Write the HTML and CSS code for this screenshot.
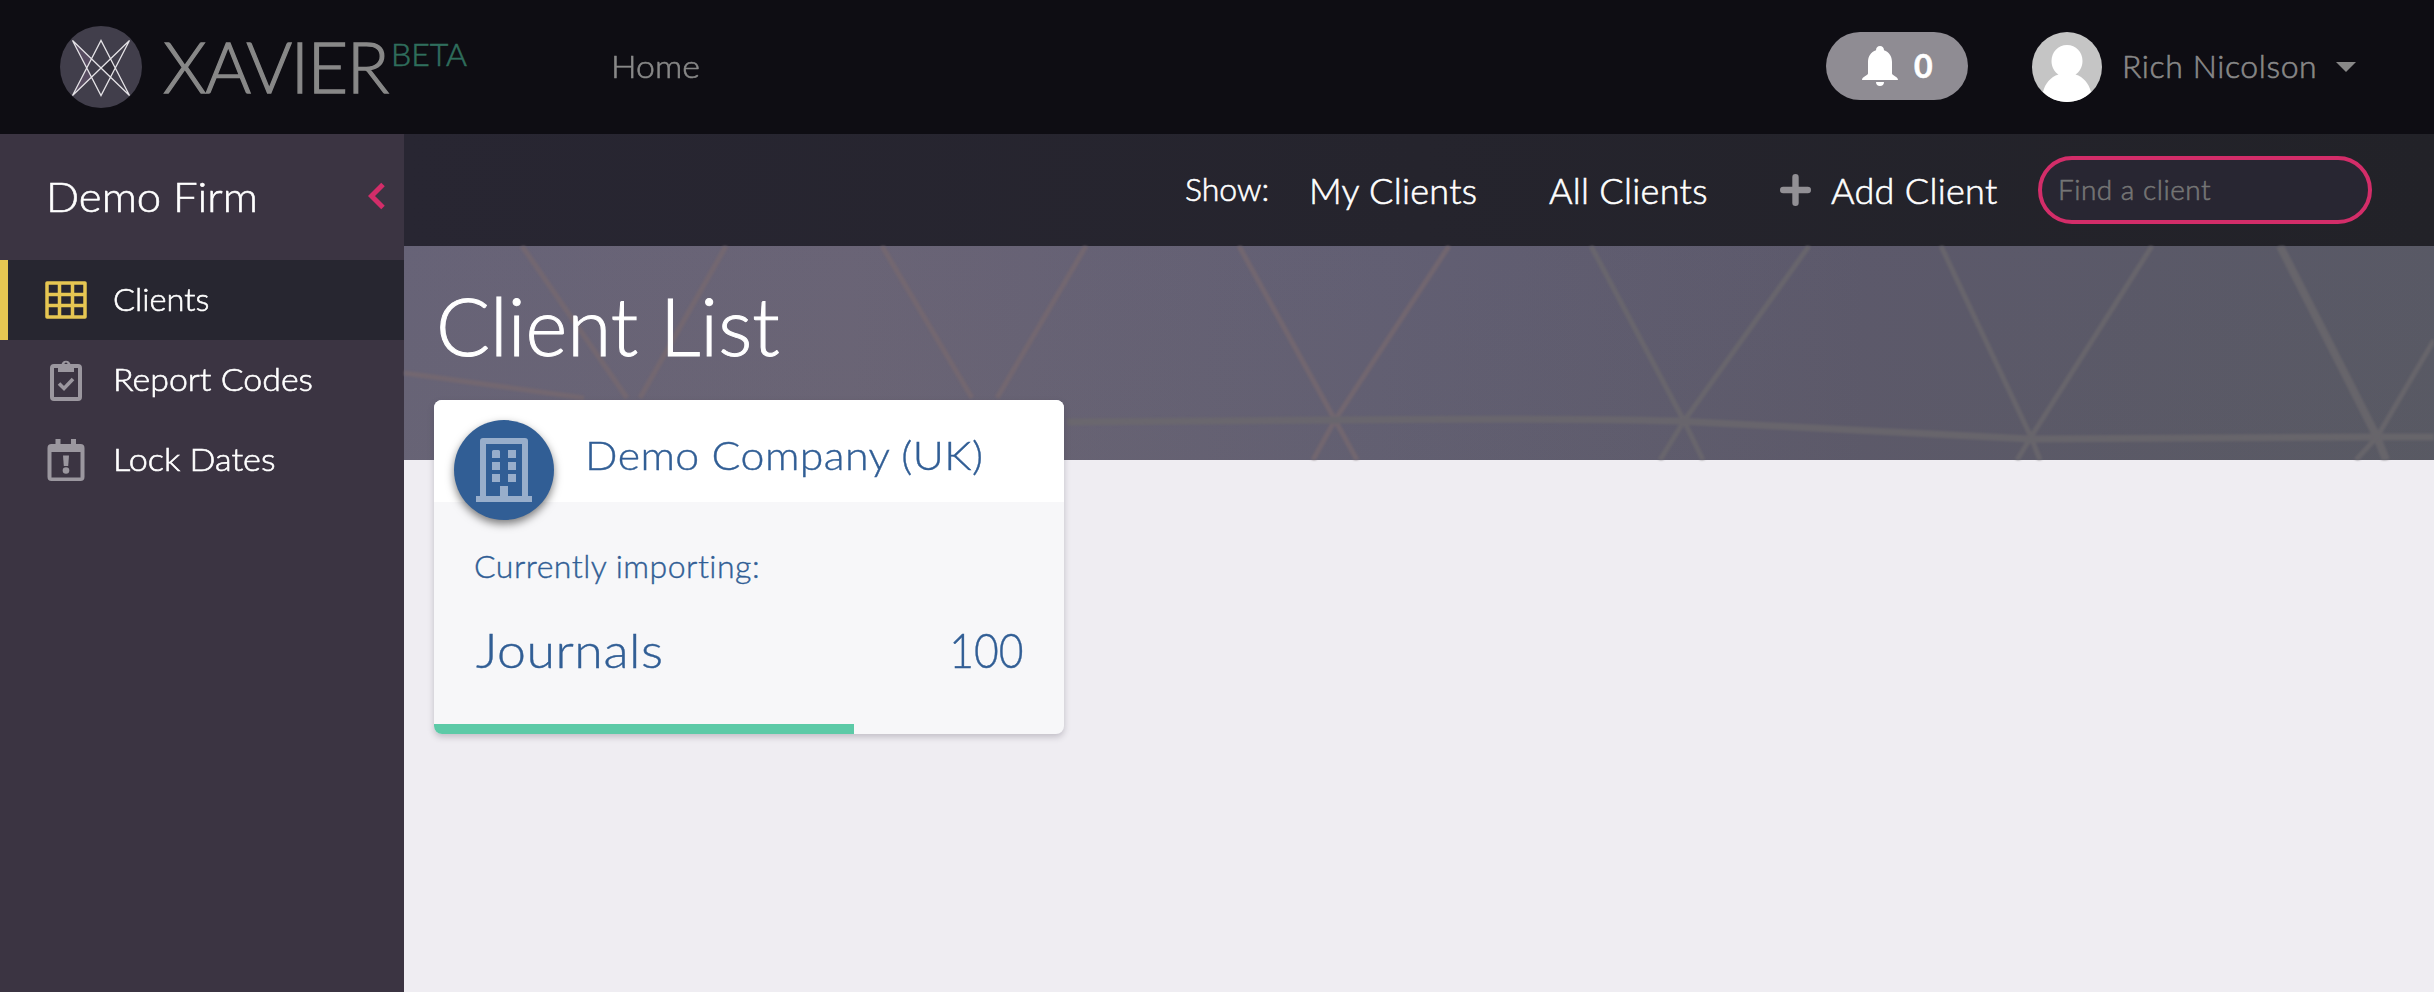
FILE: index.html
```html
<!DOCTYPE html>
<html lang="en">
<head>
<meta charset="utf-8">
<title>Xavier</title>
<link rel="stylesheet" href="styles.css">
</head>
<body>
<header class="topbar">
  <div class="brand">
    <svg class="brand-mark" viewBox="0 0 82 82">
      <circle cx="41" cy="41" r="41" fill="#413e4b"/>
      <path d="M12.500 14.500 32 33 27 42 32 51 12.500 69.500 27 42Z" fill="#584c61"/>
      <path d="M41 42 51 32 56 42 51 52Z" fill="#302d38"/>
      <path d="M12.500 14.500 41 69.500 69.500 14.500 12.500 69.500 41 14.500 69.500 69.500Z" fill="none" stroke="#e4e2e6" stroke-width="1.300"/>
    </svg>
    <span class="brand-name">XAVIER</span><span class="brand-tag">BETA</span>
  </div>
  <nav class="topnav"><a class="home">Home</a></nav>
  <div class="notice">
    <svg class="bell" viewBox="0 0 36 40"><path d="M18 0c2.500 0 4 1.800 4 4.200 5.200 1.800 8 6 8 11.800v11.500c0 2 6 3 6 6.500H0c0-3.500 6-4.500 6-6.500V16c0-5.800 2.800-10 8-11.800C14 1.800 15.500 0 18 0zM14 36h8c0 2.500-1.500 4-4 4s-4-1.500-4-4z" fill="#fff"/></svg>
    <span class="count">0</span>
  </div>
  <div class="user">
    <svg class="avatar" viewBox="0 0 70 70"><circle cx="35" cy="35" r="35" fill="#c5c5c5"/><path d="M35 13c9 0 15.500 7 15.500 16 0 6-3 11-7 13.500 8 2.500 13.500 9 15.500 17.500C53 66.500 44 70 35 70s-18-3.500-24-10c2-8.500 7.500-15 15.500-17.500-4-2.500-7-7.500-7-13.500C19.500 20 26 13 35 13z" fill="#fff"/></svg>
    <span class="user-name">Rich Nicolson</span>
    <svg class="caret" viewBox="0 0 20 10"><path d="M0 0h20L10 10z" fill="#888"/></svg>
  </div>
</header>
<div class="shell">
  <aside class="sidebar">
    <div class="firm"><span class="firm-name">Demo Firm</span>
      <svg class="chevron" viewBox="0 0 18 28"><path d="M15 2.500 3.500 14 15 25.500" fill="none" stroke="#d32d69" stroke-width="5"/></svg></div>
    <a class="item active">
      <svg class="item-icon" viewBox="0 0 42 42"><path d="M2 4h38v34H2zM14.500 4v34M27.500 4v34M2 15.500h38M2 26.500h38" fill="none" stroke="#e6c652" stroke-width="3.500" stroke-linejoin="round"/></svg>
      <span class="label clients">Clients</span></a>
    <a class="item">
      <svg class="item-icon" viewBox="0 0 42 42"><rect x="7" y="7" width="28" height="33" rx="2" fill="none" stroke="#9b979f" stroke-width="4"/><path fill-rule="evenodd" d="M13 6h3.200a5 6 0 0 1 9.600 0H29v7H13zM21 3.500a1.500 1.500 0 1 0 .01 0z" fill="#9b979f"/><path d="M14 24.500l5 5 9-9.500" fill="none" stroke="#9b979f" stroke-width="3.600"/></svg>
      <span class="label codes">Report Codes</span></a>
    <a class="item">
      <svg class="item-icon" viewBox="0 0 42 42"><path fill-rule="evenodd" d="M10.500 0h5v5h10.500V0h5v5h4.500a4 4 0 0 1 4 4v29a4 4 0 0 1-4 4h-29a4 4 0 0 1-4-4V9a4 4 0 0 1 4-4h4zM6.500 13v25.500h29V13z" fill="#9b979f"/><path d="M18 16.500h6l-.8 10.500h-4.400z" fill="#9b979f"/><circle cx="21" cy="31.500" r="3.300" fill="#9b979f"/></svg>
      <span class="label dates">Lock Dates</span></a>
  </aside>
  <main class="main">
    <div class="toolbar">
      <span class="show">Show:</span>
      <a class="my">My Clients</a>
      <a class="all">All Clients</a>
      <a class="add"><svg class="plus" viewBox="0 0 31 32"><path d="M15.500 3.200v25.600M3.200 16h24.600" stroke="#929095" stroke-width="6.400" stroke-linecap="round"/></svg><span class="add-label">Add Client</span></a>
      <input class="search" type="text" placeholder="Find a client">
    </div>
    <section class="hero">
      <svg class="lattice" viewBox="0 0 2030 214" preserveAspectRatio="none">
        <g fill="none" stroke="#77696f" stroke-width="5">
          <path d="M118 0 223 152M322 0 236 152M478 0 568 152M682 0 593 152M0 127 180 152"/>
          <path d="M835 0 931 174 953 214M1045 0 931 174 909 214"/>
        </g>
        <g fill="none" stroke="#6c696d" stroke-width="5">
          <path d="M663 176 931 174Q1150 172 1273 175L1626 193 1979 191H2030" stroke-width="7"/>
          <path d="M1187 0 1280 175 1299 214M1405 0 1280 175 1256 214"/>
          <path d="M1537 0 1627 191 1636 214M1748 0 1627 191 1613 214"/>
          <path d="M1876 0 1973 191 1982 214" stroke-width="8"/>
          <path d="M2030 94 1973 191 1952 214"/>
        </g>
      </svg>
      <h1 class="title">Client List</h1>
    </section>
    <article class="card">
      <div class="card-head">
        <div class="badge"><svg class="building" viewBox="0 0 56 64"><path fill-rule="evenodd" d="M7 0h42a3 3 0 0 1 3 3v55h4v6H0v-6h4V3a3 3 0 0 1 3-3zM10 6v52h14V48h8v10h14V6zM16 13.500a1.500 1.500 0 0 1 1.500-1.500h5a1.500 1.500 0 0 1 1.500 1.500V20h-8zM32 12h8v8h-8zM16 24h8v8h-8zM32 24h8v8h-8zM16 36h8v8h-8zM32 36h8v8h-8z" fill="#98aecb"/></svg></div>
        <span class="company">Demo Company (UK)</span>
      </div>
      <div class="card-body">
        <div class="status">Currently importing:</div>
        <div class="row"><span class="journals">Journals</span><span class="hundred">100</span></div>
      </div>
      <div class="progress"><div class="bar" style="width:66.67%"></div></div>
    </article>
  </main>
</div>
</body>
</html>
```
FILE: styles.css
```css
* { box-sizing: border-box; }
body { margin: 0; font-family: Lato, "Open Sans", sans-serif; font-weight: 300; font-size: 32px; background: #efedf2; color: #fff; white-space: nowrap; -webkit-text-stroke: .6px currentColor; }
svg { display: block; flex: none; }
h1 { margin: 0; }
.topbar { height: 134px; background: #0e0d13; display: flex; align-items: center; color: #888; padding-left: 60px; }
.brand { display: flex; width: 551px; height: 82px; align-items: center; }
.brand-mark { width: 82px; height: 82px; }
.brand-name { font-size: 70px; margin-left: 21px; width: 228px; line-height: 82px; padding-bottom: 3px; letter-spacing: -1.4px; -webkit-text-stroke-width: 1.3px; }
.brand-tag { color: #2f6e5d; align-self: flex-start; line-height: 55px; }
.topnav { flex: 1; padding-bottom: 3px; }
.home { display: inline-block; transform: scaleX(1.06); transform-origin: 0 50%; }
.notice { width: 142px; height: 68px; border-radius: 34px; background: #8f8c93; display: flex; align-items: center; padding-left: 36px; gap: 16px; color: #fff; margin-bottom: 2px; }
.bell { width: 36px; height: 40px; }
.count { font-weight: 700; padding-bottom: 2px; }
.user { display: flex; align-items: center; margin-left: 64px; width: 402px; }
.avatar { width: 70px; height: 70px; }
.user-name { margin-left: 20px; width: 214px; letter-spacing: .6px; padding-bottom: 3px; }
.caret { width: 20px; height: 10px; }
.shell { display: flex; height: 858px; }
.sidebar { width: 404px; background: #3b3442; flex: none; }
.firm { height: 124px; display: flex; align-items: center; justify-content: space-between; padding: 0 18px 0 46px; margin-bottom: 2px; }
.firm-name { font-size: 42px; transform: scaleX(1.04); transform-origin: 0 50%; }
.chevron { width: 18px; height: 28px; }
.item { height: 80px; display: flex; align-items: center; gap: 26px; padding-left: 37px; border-left: 8px solid transparent; }
.active { background: #272630; border-left-color: #e6c652; }
.item-icon { width: 42px; height: 42px; }
.label { padding-bottom: 3px; transform-origin: 0 50%; }
.clients { transform: scaleX(1.02); }
.codes { transform: scaleX(1.06); }
.dates { transform: scaleX(1.07); }
.main { flex: 1; min-width: 0; }
.toolbar { height: 112px; background: linear-gradient(90deg, #282632, #222228); display: flex; align-items: center; padding-left: 781px; font-size: 36px; letter-spacing: .3px; }
.show { font-size: 32px; width: 124px; letter-spacing: 0; padding-bottom: 4px; }
.my { width: 240px; }
.all { width: 231px; }
.add { display: flex; align-items: center; gap: 20px; width: 258px; }
.plus { width: 31px; height: 32px; }
.search { width: 334px; height: 68px; border: 4px solid #d32d69; border-radius: 34px; background: #282632; padding: 0 16px 2px; font: 300 28px Lato, sans-serif; letter-spacing: .5px; color: #fff; outline: 0; }
.search::placeholder { color: #757575; opacity: 1; }
.hero { height: 214px; display: grid; background: linear-gradient(175deg, rgba(96, 92, 125, .15), rgba(100, 100, 100, .12)), linear-gradient(90deg, #686476 0%, #6b6575 22%, #625f72 48%, #5b5869 72%, #575863 100%); }
.lattice { grid-area: 1 / 1; width: 100%; height: 214px; opacity: .75; filter: blur(.9px); }
.title { grid-area: 1 / 1; font-size: 80px; font-weight: 300; line-height: 159px; padding-left: 32px; z-index: 1; -webkit-text-stroke-width: 1px; }
.card { width: 630px; height: 334px; margin: -60px 0 0 30px; position: relative; background: #f7f7f9; border-radius: 8px; overflow: hidden; display: flex; flex-direction: column; box-shadow: 0 3px 6px rgba(60, 50, 70, .25); color: #315e95; -webkit-text-stroke-width: .4px; }
.card-head { height: 102px; background: #fff; display: flex; padding: 20px 0 0 20px; }
.badge { width: 100px; height: 100px; border-radius: 50%; background: #315e95; display: flex; justify-content: center; padding-top: 18px; box-shadow: 0 4px 8px rgba(0, 0, 0, .5); flex: none; }
.building { width: 56px; height: 64px; }
.company { font-size: 40px; line-height: 70px; margin-left: 31px; letter-spacing: .4px; transform: scaleX(1.07); transform-origin: 0 50%; }
.card-body { flex: 1; padding: 44px 40px 0; }
.status { line-height: 40px; letter-spacing: .5px; }
.row { display: flex; justify-content: space-between; font-size: 48px; line-height: 60px; margin-top: 34px; }
.journals { letter-spacing: .5px; margin-left: 2px; transform: scaleX(1.08); transform-origin: 0 50%; }
.hundred { transform: scaleX(.89); transform-origin: 100% 50%; }
.progress { height: 10px; }
.bar { height: 10px; background: #5ccaa7; }
```
